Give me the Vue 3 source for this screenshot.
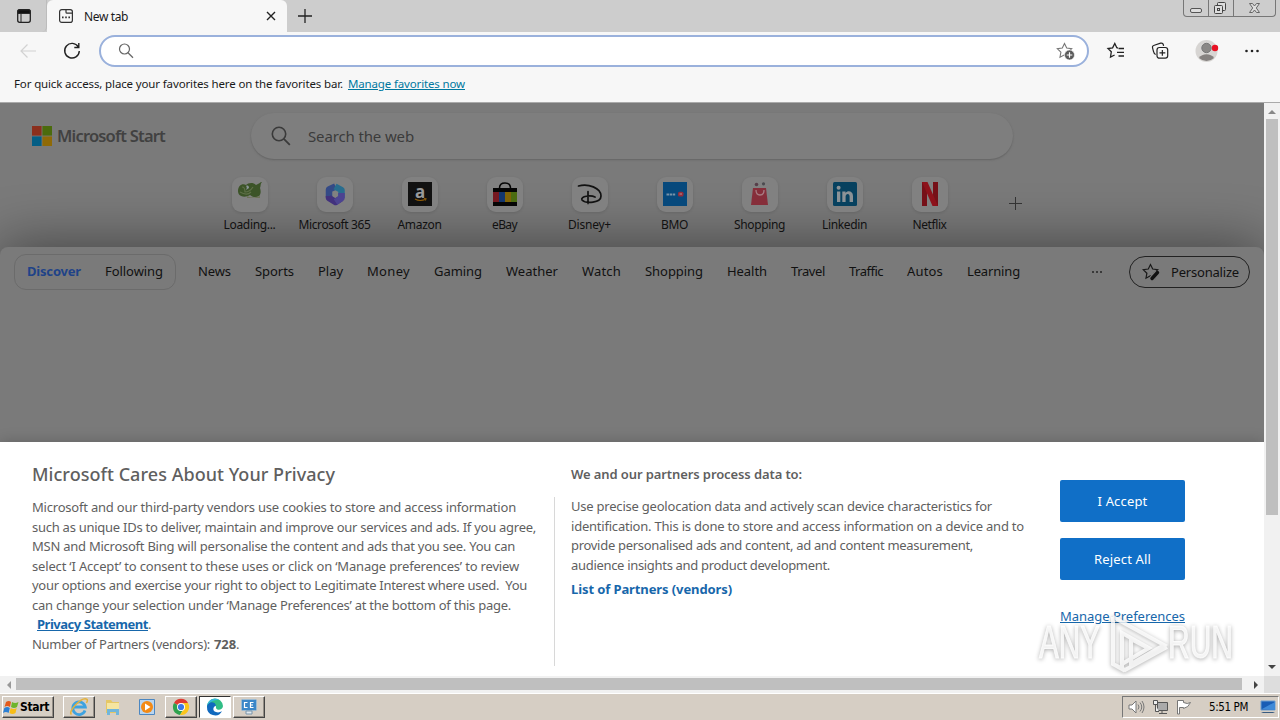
<!--
  App — browser window with the new tab page, the privacy banner and the taskbar
-->
<template>
  <div class="desktop">
    <!-- tab strip -->
    <header class="tab-strip">
      <div class="tab-actions">
        <svg width="16" height="16" viewBox="0 0 16 16"><rect x="1.7" y="1.7" width="12.6" height="12.6" rx="2" fill="none" stroke="#222" stroke-width="1.3" /><path d="M2 2h12v3.4H2zM5 5v9" fill="#111" stroke="#222" /></svg>
      </div>
      <div class="tab">
        <svg width="16" height="16" viewBox="0 0 16 16" fill="none" stroke="#333" stroke-width="1.2"><rect x="1.6" y="1.6" width="12.8" height="12.8" rx="2.2" /><path d="M8 2v2.2q0 1 1 1h5.2" /><path d="M4 9.3h1.6M7.2 9.3h1.6M10.4 9.3H12" stroke-width="1.7" /></svg>
        <span v-fit="44" class="tab-title">New tab</span>
        <svg class="tab-close" width="10" height="10" viewBox="0 0 10 10"><path d="M1 1l8 8M9 1l-8 8" stroke="#222" stroke-width="1.4" /></svg>
      </div>
      <svg class="tab-add" width="16" height="16" viewBox="0 0 16 16"><path d="M8 1v14M1 8h14" stroke="#222" stroke-width="1.3" /></svg>
      <div class="window-buttons">
        <span><svg width="24" height="16" viewBox="0 0 24 16"><rect x="6.5" y="8.5" width="11" height="4" rx="1.5" fill="#ddd" stroke="#555" /></svg></span>
        <span><svg width="24" height="16" viewBox="0 0 24 16" fill="#ddd" stroke="#444"><rect x="8.5" y="2.5" width="8" height="8" rx="1" /><rect x="5.500" y="5.500" width="8" height="8" rx="1" /><rect x="8.500" y="8.500" width="2" height="2" /></svg></span>
        <span><svg width="40" height="16" viewBox="0 0 40 16"><path d="M15.500 3.500h3l2 2.500 2-2.500h3L22.300 8l3.200 4.500h-3l-2-2.500-2 2.500h-3L18.700 8z" fill="#ddd" stroke="#666" /></svg></span>
      </div>
    </header>

    <!-- address bar -->
    <div class="toolbar">
      <svg class="icon-back" width="18" height="16" viewBox="0 0 18 16"><path d="M17 8H2M8.500 1.500L2 8l6.500 6.500" fill="none" stroke="#d2d2d2" stroke-width="1.2" /></svg>
      <svg class="icon-reload" width="18" height="18" viewBox="0 0 18 18"><path d="M15.300 5A7.300 7.300 0 1 0 16.300 9M15.800 1v4.500h-4.500" fill="none" stroke="#222" stroke-width="1.400" /></svg>
      <div class="address">
        <svg width="16" height="16" viewBox="0 0 16 16"><circle cx="6.500" cy="6" r="5" fill="none" stroke="#666" stroke-width="1.200" /><path d="M10 9.800l5 5" stroke="#666" stroke-width="1.300" /></svg>
        <svg width="19" height="18" viewBox="0 0 19 18"><path :d="starPath" fill="none" stroke="#777" stroke-width="1.100" /><circle cx="13.500" cy="13" r="5" fill="#5b5b5b" stroke="#fff" stroke-width=".6" /><path d="M13.500 10.200v5.600M10.700 13h5.600" stroke="#fff" stroke-width="1.200" /></svg>
      </div>
      <div class="toolbar-icons">
        <svg width="18" height="18" viewBox="0 0 18 18" fill="none" stroke="#222" stroke-width="1.300"><path d="M11 6L9.800 5.700 7.800 1.500 5.600 5.900 1 6.500l3.300 3.300-.8 5.200L7.600 13M11.500 6.500H17M10 10.300h7M11.500 14H17" /></svg>
        <svg width="18" height="18" viewBox="0 0 18 18" fill="none" stroke="#222" stroke-width="1.200"><path d="M4.700 12.500C2.500 12 2.800 10 2 7.600 1.200 5 1 4 3.300 3.200L9.600 1.200c1.800-.4 2.600.4 3 2.700" /><rect x="6" y="5.500" width="10.700" height="10.700" rx="2.400" /><path d="M11.350 8v5.800M8.500 10.900h5.800" /></svg>
        <svg width="25" height="24" viewBox="0 0 25 24"><circle cx="11.500" cy="12" r="11" fill="#d7d5d3" /><circle cx="11.500" cy="9" r="4.700" fill="#8a8886" stroke="#777" /><path d="M4 19c3-5 12-5 15 0a11 11 0 0 1-15 0z" fill="#85817f" /><circle cx="20" cy="9" r="3.200" fill="#e81123" /></svg>
        <svg width="16" height="4" viewBox="0 0 16 4" fill="#222"><circle cx="2.500" cy="2" r="1.300" /><circle cx="8" cy="2" r="1.300" /><circle cx="13.500" cy="2" r="1.300" /></svg>
      </div>
    </div>

    <div class="favorites-bar">
      <span v-fit="329">For quick access, place your favorites here on the favorites bar.</span>
      <a v-fit="117">Manage favorites now</a>
    </div>

    <!-- page + vertical scrollbar -->
    <div class="viewport">
      <main class="page">
        <section class="hero">
          <div class="search-row">
            <div class="brand">
              <svg width="20" height="20" viewBox="0 0 20 20"><path d="M0 0h9.600v9.600H0z" fill="#8b2f1d" /><path d="M10.400 0H20v9.600h-9.600z" fill="#4b6b0d" /><path d="M0 10.400h9.600V20H0z" fill="#045e85" /><path d="M10.400 10.400H20V20h-9.600z" fill="#8f6a07" /></svg>
              <span v-fit="108">Microsoft Start</span>
            </div>
            <div class="search-box">
              <svg width="20" height="20" viewBox="0 0 20 20"><circle cx="8" cy="8" r="6.700" fill="none" stroke="#3a3a3a" stroke-width="1.600" /><path d="M12.800 12.800l6 6" stroke="#3a3a3a" stroke-width="1.800" /></svg>
              <span v-fit="106">Search the web</span>
            </div>
          </div>
          <div class="shortcuts">
            <div v-for="s in shortcuts" :key="s.name" class="shortcut">
              <div class="tile">
                <svg v-if="s.icon === 'msn'" width="26" height="26" viewBox="0 0 26 26"><path d="M1 10C1 5 5 2 9 4c2-2 7-3 10 0 3-1 4-3 6-3-2 2-1 4-2 6 1 3 1 6-1 8-3 2-7 1-9-1-5 3-12 2-12-4z" fill="#3c5428" /><path d="M5 6c2 0 3 2 3 5 3 0 6-2 8-5M3 11c5 3 8 3 11 0" fill="none" stroke="#5f7048" stroke-width="1.200" /><path d="M9 5c2-1 3 0 3 2l-3 2c1-2 1-3 0-4z" fill="#8b9699" /><path d="M10 15q6 3 13 0v2H10z" fill="#6c7256" /></svg>
                <svg v-else-if="s.icon === 'm365'" width="24" height="24" viewBox="0 0 24 24" fill="none" stroke-width="6.500" stroke-linejoin="round"><path d="M12.500 4.500L6 7.500v8" stroke="#344a86" /><path d="M6 14v2l6.500 4 6-4" stroke="#42317d" /><path d="M12 4.500l6.500 3.500v8" stroke="#286d8e" /><path d="M18.500 11v5l-6 4" stroke="#4c4391" /></svg>
                <svg v-else-if="s.icon === 'amazon'" width="24" height="24" viewBox="0 0 24 24"><path d="M0 0h24v24H0z" fill="#111" /><text x="12" y="15.500" class="glyph-a">a</text><path d="M7 17q5 3 11 0M16 16.500l2 .3-.6 1.700" fill="none" stroke="#8e5b08" stroke-width="1.100" /></svg>
                <svg v-else-if="s.icon === 'ebay'" width="24" height="24" viewBox="0 0 24 24"><path d="M6.500 8V6q0-5 5.500-5t5.500 5v2" fill="none" stroke="#050505" stroke-width="1.500" /><path d="M0 6h24v18H0z" fill="#050505" /><path d="M0 10h6v10H0z" fill="#751820" /><path d="M6 10h6v10H6z" fill="#12366f" /><path d="M12 10h6v10h-6z" fill="#806307" /><path d="M18 10h6v10h-6z" fill="#4c6c11" /></svg>
                <svg v-else-if="s.icon === 'disney'" width="26" height="24" viewBox="0 0 26 24" fill="none" stroke="#111" stroke-linecap="round"><path d="M1.500 4C11 1 24 6 24 14c0 7-15 8-19 4-2-4 9-5 13-3M11 9.500v12" stroke-width="1.700" /></svg>
                <svg v-else-if="s.icon === 'bmo'" width="24" height="24" viewBox="0 0 24 24"><path d="M0 0h24v24H0z" fill="#07497c" /><path d="M3.500 12.500h9" stroke="#7792a8" stroke-width="2.200" stroke-dasharray="2.500 .6" /><rect x="15" y="9.700" width="5.500" height="4.800" rx="1.500" fill="#962c3b" /><path d="M16.500 12h2.500" stroke="#a69699" /></svg>
                <svg v-else-if="s.icon === 'shopping'" width="24" height="24" viewBox="0 0 24 24"><circle cx="8.500" cy="2.500" r="1.800" fill="#563e49" /><circle cx="15.500" cy="1.800" r="1.600" fill="#4b4b50" /><path d="M5 6h13l2 17H3z" fill="#862e3a" /><path d="M8 8q0 5 4 5t4-5" fill="none" stroke="#a77b82" stroke-width="1.300" /></svg>
                <svg v-else-if="s.icon === 'linkedin'" width="24" height="24" viewBox="0 0 24 24"><rect width="24" height="24" rx="1.500" fill="#07415f" /><circle cx="5.600" cy="5.800" r="2" fill="#8b9296" /><path d="M4 9.500h3.300V20H4zM9.300 9.500h3.200V11c2-2.800 7.500-2.200 7.500 3v6h-3.400v-5.500c0-3.400-4-3.200-4 0V20H9.300z" fill="#8b9296" /></svg>
                <svg v-else width="18" height="24" viewBox="0 0 18 24"><path d="M1 0h5v24H1zM12 0h5v24h-5z" fill="#761018" /><path d="M1 0h5.500L17 24h-5.500z" fill="#8d121b" /></svg>
              </div>
              <span v-fit="s.width">{{ s.name }}</span>
            </div>
            <svg class="add-shortcut" width="13" height="13" viewBox="0 0 13 13"><path d="M6.500 0v13M0 6.500h13" stroke="#333" /></svg>
          </div>
        </section>

        <section class="feed">
          <nav class="feed-nav">
            <div class="feed-tabs">
              <b v-fit="54">Discover</b>
              <span v-fit="58">Following</span>
            </div>
            <span v-for="n in channels" :key="n.name" v-fit="n.width">{{ n.name }}</span>
            <svg class="more" width="12" height="4" viewBox="0 0 12 4" fill="#242424"><circle cx="2" cy="2" r="1" /><circle cx="6" cy="2" r="1" /><circle cx="10" cy="2" r="1" /></svg>
            <div class="personalize">
              <svg width="18" height="18" viewBox="0 0 18 18"><path :d="starPath" fill="none" stroke="#191919" stroke-width="1.200" /><path d="M10 15.500l5.500-6" stroke="#7a7a7a" stroke-width="6" /><path d="M10 15.500l5.500-6" stroke="#111" stroke-width="3.400" stroke-linecap="round" /></svg>
              <span v-fit="68">Personalize</span>
            </div>
          </nav>
        </section>

        <!-- privacy banner -->
        <section class="banner">
          <div class="notice">
            <h2 v-fit="303">Microsoft Cares About Your Privacy</h2>
            <p v-for="l in noticeLines" :key="l.text"><span v-fit="l.width">{{ l.text }}</span></p>
            <p class="statement"><a v-fit="111">Privacy Statement</a>.</p>
            <p><span v-fit="178">Number of Partners (vendors):</span><b v-fit="22" class="count">728</b>.</p>
          </div>
          <div class="purposes">
            <h3 v-fit="231">We and our partners process data to:</h3>
            <p v-for="l in purposeLines" :key="l.text"><span v-fit="l.width">{{ l.text }}</span></p>
            <a v-fit="161" class="vendors">List of Partners (vendors)</a>
          </div>
          <div class="banner-buttons">
            <button><span v-fit="50">I Accept</span></button>
            <button><span v-fit="57">Reject All</span></button>
            <a v-fit="125">Manage Preferences</a>
          </div>
          <svg class="watermark" width="204" height="66" viewBox="0 0 204 66">
            <text x="5" y="50" textLength="61" lengthAdjust="spacingAndGlyphs">ANY</text>
            <path d="M79 9l51 28-33 19V31l17 9M79 9v47l9 5V25l27 15-27 16M79 56l12 6 42-23" />
            <text x="134" y="50" textLength="65" lengthAdjust="spacingAndGlyphs">RUN</text>
          </svg>
        </section>
      </main>
      <div class="v-scroll">
        <i class="arrow up"></i>
        <div class="v-thumb"></div>
        <i class="arrow down"></i>
      </div>
    </div>

    <div class="h-scroll">
      <i class="arrow left"></i>
      <div class="h-thumb"></div>
      <i class="arrow right"></i>
      <div class="corner"></div>
    </div>

    <!-- taskbar -->
    <footer class="taskbar">
      <div class="start raised">
        <svg width="16" height="16" viewBox="0 0 16 16"><path d="M3 3q3-2 5 0L7 8Q4 6 1.500 8z" fill="#e35a1c" /><path d="M9 3q3 2 6.500 0L14 8q-3 2-6 0z" fill="#6fb52c" /><path d="M1.300 9q3-2 5.500 0l-1.200 5Q3 12 0 14z" fill="#2b7fd4" /><path d="M7.700 9q3 2 6 0l-1.200 5q-3 2-6 0z" fill="#f8bd17" /></svg>
        <span v-fit="29">Start</span>
      </div>
      <div class="task raised">
        <svg width="20" height="20" viewBox="0 0 20 20" fill="none"><path d="M16 13.500A6.300 6.300 0 1 1 16.300 10H5" stroke="#3da2e0" stroke-width="2.800" /><path d="M2.500 17.500C-2 15 13-1 18 2.300q1 1-.5 3.700" stroke="#e4b23c" stroke-width="1.500" /></svg>
      </div>
      <div class="task">
        <svg width="18" height="18" viewBox="0 0 18 18"><path d="M2 2h5l1.500 2H15v11H2z" fill="#e5c765" /><path d="M3 5h12v9H3z" fill="#f5e5a0" /><path d="M3 17v-6h12v6h-3v-3H6v3z" fill="#71b6db" /></svg>
      </div>
      <div class="task">
        <svg width="18" height="18" viewBox="0 0 18 18"><path d="M1.500 1.500h15v15h-15z" fill="#b9d5ef" stroke="#4c87c1" /><circle cx="9" cy="9" r="6" fill="#f38a15" /><path d="M7 5.500v7L12.500 9z" fill="#fff" /></svg>
      </div>
      <div class="task raised">
        <svg width="18" height="18" viewBox="0 0 18 18"><path d="M9 9L2 5A8 8 0 0 1 16 5z" fill="#df3a31" /><path d="M2 5a8 8 0 0 0 6 12l4-7-3-1z" fill="#2fa24e" /><path d="M16 5a8 8 0 0 1-8 12l4.500-7L10 5z" fill="#fbc51b" /><circle cx="9" cy="9" r="4" fill="#fff" /><circle cx="9" cy="9" r="3.100" fill="#3b78e7" /></svg>
      </div>
      <div class="task active">
        <svg width="18" height="18" viewBox="0 0 18 18"><path d="M1 9a8 8 0 0 1 16-1c0 4-6 5-7 2 1-5-6-5-7 0" fill="#31bd86" /><path d="M1 9c0-5 8-7 9-1-3 0-4 5 0 6 2 .8 4 .3 6-.8A8 8 0 0 1 1 9z" fill="#1169be" /><path d="M1 7.500A8 8 0 0 1 13 2C8 2 3 4 1 7.500z" fill="#35b7df" /></svg>
      </div>
      <div class="task raised">
        <svg width="18" height="18" viewBox="0 0 18 18"><rect x="1.500" y="1.500" width="15" height="11" rx="1" fill="#3c87c8" stroke="#9bbbd3" /><path d="M7.500 4.500h-3v5h3M13.500 4.500h-3v5h3M10.500 7h2.500" fill="none" stroke="#fff" stroke-width="1.200" /><path d="M6 13h6v3H6z" fill="#e2eaf0" stroke="#7894aa" /></svg>
      </div>
      <div class="tray">
        <svg width="17" height="16" viewBox="0 0 17 16" fill="none" stroke="#777"><path d="M1 6h3l4-4v12l-4-4H1z" fill="#fff" /><path d="M10 5.500q2 2.500 0 5M12 3.500q3.500 4.500 0 9M14 2q4 6 0 12" /></svg>
        <svg width="17" height="16" viewBox="0 0 17 16"><path d="M5.500 3.500h10v8h-10z" fill="#aaa" stroke="#555" /><path d="M7 14.500h8M10 12v2" stroke="#555" /><path d="M1.500 1.500h4v4h-4zM3.500 6v6.500H7" fill="#eee" stroke="#555" /></svg>
        <svg width="16" height="16" viewBox="0 0 16 16"><path d="M1.500 15V1.500h6v2q4 2 7 0-2 5-7 6v-1h-4V15z" fill="#fff" stroke="#777" /></svg>
        <span v-fit="39">5:51 PM</span>
        <svg class="monitor" width="16" height="14" viewBox="0 0 16 14"><path d="M1 1h14v9H1z" fill="#195db5" stroke="#6f9fd0" /><path d="M2 9L15 2v8z" fill="#3f8ad8" /><path d="M3 12h10l2 1H1z" fill="#385b80" /></svg>
      </div>
    </footer>
  </div>
</template>

<script setup>
// ============================================================
// 数据
// ============================================================

const starPath = 'M8.500 1.500L6.300 6 1.300 6.700l3.600 3.500-.9 5 4.500-2.400 4.500 2.400-.9-5 3.600-3.500-5-.7z'

// 快捷方式：width 为标签文字宽度
const shortcuts = [
  { name: 'Loading...', icon: 'msn', width: 52 },
  { name: 'Microsoft 365', icon: 'm365', width: 72 },
  { name: 'Amazon', icon: 'amazon', width: 44 },
  { name: 'eBay', icon: 'ebay', width: 25 },
  { name: 'Disney+', icon: 'disney', width: 43 },
  { name: 'BMO', icon: 'bmo', width: 27 },
  { name: 'Shopping', icon: 'shopping', width: 51 },
  { name: 'Linkedin', icon: 'linkedin', width: 45 },
  { name: 'Netflix', icon: 'netflix', width: 34 }
]

const channels = [
  { name: 'News', width: 33 },
  { name: 'Sports', width: 39 },
  { name: 'Play', width: 25 },
  { name: 'Money', width: 43 },
  { name: 'Gaming', width: 48 },
  { name: 'Weather', width: 52 },
  { name: 'Watch', width: 39 },
  { name: 'Shopping', width: 58 },
  { name: 'Health', width: 40 },
  { name: 'Travel', width: 34 },
  { name: 'Traffic', width: 34 },
  { name: 'Autos', width: 36 },
  { name: 'Learning', width: 53 }
]

const noticeLines = [
  { text: 'Microsoft and our third-party vendors use cookies to store and access information', width: 484 },
  { text: 'such as unique IDs to deliver, maintain and improve our services and ads. If you agree,', width: 504 },
  { text: 'MSN and Microsoft Bing will personalise the content and ads that you see. You can', width: 483 },
  { text: 'select ‘I Accept’ to consent to these uses or click on ‘Manage preferences’ to review', width: 487 },
  { text: 'your options and exercise your right to object to Legitimate Interest where used.  You', width: 495 },
  { text: 'can change your selection under ‘Manage Preferences’ at the bottom of this page.', width: 479 }
]

const purposeLines = [
  { text: 'Use precise geolocation data and actively scan device characteristics for', width: 421 },
  { text: 'identification. This is done to store and access information on a device and to', width: 453 },
  { text: 'provide personalised ads and content, ad and content measurement,', width: 402 },
  { text: 'audience insights and product development.', width: 259 }
]

// ============================================================
// 指令
// ============================================================

/**
 * v-fit="宽度"：调整字间距，让单行文字正好占满给定宽度
 */
const vFit = {
  mounted(el, { value }) {
    const natural = el.getBoundingClientRect().width
    el.style.letterSpacing = `${(value - natural) / el.textContent.length}px`
  }
}
</script>

<style>
html, body {
  overflow: hidden;
}
</style>

<style scoped>
.desktop {
  display: flex;
  flex-direction: column;
  width: 1280px;
  height: 720px;
  overflow: hidden;
  font-family: "Noto Sans", "Open Sans", sans-serif;
  font-size: 12px;
  color: #1a1a1a;
  background: #f7f7f7;
}

.desktop * {
  box-sizing: border-box;
}

svg {
  display: block;
  flex: none;
  overflow: visible;
}

span, a, b, h2, h3 {
  white-space: pre;
}

p {
  margin: 0;
}

/* 标签栏 */
.tab-strip {
  display: flex;
  flex: none;
  height: 32px;
  background: #cdcdcd;
}

.tab-actions {
  width: 47px;
  padding: 8px 0 0 16px;
  border-right: 1px solid #bcbcbc;
  border-bottom-right-radius: 5px;
}

.tab {
  display: flex;
  align-items: center;
  width: 240px;
  padding: 0 11px 0 11px;
  background: #f7f7f7;
  border-radius: 6px 6px 0 0;
}

.tab-title {
  margin-left: 10px;
}

.tab-close {
  margin-left: auto;
}

.tab-add {
  margin: 8px 0 0 10px;
}

.window-buttons {
  display: flex;
  width: 93px;
  height: 17px;
  margin: 0 4px 0 auto;
  border: 1px solid #777;
  border-top: 0;
  border-radius: 0 0 4px 4px;
}

.window-buttons span + span {
  border-left: 1px solid #777;
}

/* 工具栏 */
.toolbar {
  display: flex;
  flex: none;
  align-items: center;
  height: 38px;
  padding-left: 19px;
}

.icon-reload {
  margin-left: 26px;
}

.address {
  display: flex;
  align-items: center;
  justify-content: space-between;
  width: 990px;
  height: 32px;
  margin-left: 18px;
  padding: 0 12px 0 17px;
  border: 2px solid #9ab1dc;
  border-radius: 16px;
  background: #fff;
}

.toolbar-icons {
  display: flex;
  align-items: center;
  margin-left: 18px;
}

.toolbar-icons svg:nth-child(2) {
  margin-left: 26px;
}

.toolbar-icons svg:nth-child(3) {
  margin-left: 26px;
}

.toolbar-icons svg:nth-child(4) {
  margin-left: 24px;
}

.favorites-bar {
  display: flex;
  flex: none;
  gap: 5px;
  height: 33px;
  padding: 6px 14px 0;
  line-height: 16px;
  font-size: 11.5px;
  border-bottom: 1px solid #aaa;
}

.favorites-bar a {
  color: #00789f;
  text-decoration: underline;
}

/* 页面 */
.viewport {
  display: flex;
  flex: none;
  height: 573px;
}

.page {
  display: flex;
  flex-direction: column;
  width: 1264px;
  overflow: hidden;
  background: #7a7a7a;
}

.hero {
  position: relative;
  z-index: 1;
  flex: none;
  height: 144px;
  padding-top: 10px;
}

.search-row {
  display: flex;
  align-items: center;
}

.brand {
  display: flex;
  align-items: center;
  width: 219px;
  margin-left: 32px;
  font-size: 16.5px;
  font-weight: 600;
  color: #414141;
  line-height: 24px;
}

.brand span {
  margin-left: 5px;
}

.search-box {
  display: flex;
  align-items: center;
  width: 762px;
  height: 46px;
  padding-left: 20px;
  border-radius: 23px;
  background: #7e7e7e;
  box-shadow: 0 1px 2px #636363;
  font-size: 15px;
  color: #3b3b3b;
}

.search-box span {
  margin-left: 17px;
}

.shortcuts {
  display: flex;
  padding: 18px 0 0 207px;
}

.shortcut {
  display: flex;
  flex-direction: column;
  align-items: center;
  width: 85px;
  line-height: 16px;
  font-size: 12px;
  color: #111;
}

.tile {
  display: flex;
  align-items: center;
  justify-content: center;
  width: 36px;
  height: 35px;
  margin-bottom: 5px;
  padding-bottom: 1px;
  border-radius: 9px;
  background: #818181;
  box-shadow: 0 1px 3px rgba(0, 0, 0, .12);
}

.glyph-a {
  font: bold 17px "Noto Sans", sans-serif;
  text-anchor: middle;
  fill: #999;
}

.add-shortcut {
  margin: 20px 0 0 37px;
}

.feed {
  flex: none;
  height: 195px;
  padding-top: 6px;
  border-radius: 8px 8px 0 0;
  background: #7a7a7a;
  box-shadow: 0 -3px 55px rgba(0, 0, 0, .45);
}

.feed-nav {
  display: flex;
  align-items: center;
  gap: 24px;
  height: 37px;
  padding-left: 14px;
  font-size: 13px;
  color: #111;
}

.feed-nav > span {
  flex: none;
  margin-top: -1px;
}

.feed-tabs {
  display: flex;
  align-items: center;
  gap: 24px;
  width: 162px;
  height: 36px;
  margin-right: -2px;
  padding: 0 0 2px 12px;
  border: 1px solid #6b6b6b;
  border-radius: 12px;
}

.feed-tabs b {
  color: #1f4388;
}

.more {
  margin-left: auto;
}

.personalize {
  display: flex;
  align-items: center;
  width: 121px;
  height: 32px;
  margin-right: 14px;
  margin-left: 2px;
  padding-left: 12px;
  border: 1px solid #222;
  border-radius: 16px;
}

.personalize span {
  margin-left: 11px;
}

/* 隐私横幅 */
.banner {
  position: relative;
  display: flex;
  flex: none;
  height: 234px;
  padding: 0 32px;
  background: #fff;
  box-shadow: 0 0 14px rgba(0, 0, 0, .2);
  font-size: 13px;
  line-height: 19.5px;
  color: #5f5f5f;
}

.notice {
  width: 539px;
  padding-top: 20px;
  background: linear-gradient(#d8d8d8, #d8d8d8) 522px 55px / 1px 169px no-repeat;
}

.notice h2 {
  display: table;
  margin: 0 0 11px;
  font-size: 18px;
  font-weight: 500;
  line-height: 25px;
}

.statement {
  padding-left: 5px;
}

.statement a {
  font-weight: 700;
  color: #1767ab;
  text-decoration: underline;
}

.count {
  margin-left: 4px;
}

.purposes {
  width: 489px;
  padding-top: 22px;
}

.purposes h3 {
  display: table;
  margin: 0 0 13px;
  font-size: 13px;
  font-weight: 600;
  line-height: 20px;
}

.vendors {
  display: inline-block;
  margin-top: 5px;
  font-weight: 700;
  color: #1767ab;
}

.banner-buttons {
  display: flex;
  flex-direction: column;
  align-items: flex-start;
  padding-top: 38px;
}

.banner-buttons button {
  width: 125px;
  height: 42px;
  margin: 0 0 16px;
  padding: 2px 0 0;
  border: 0;
  border-radius: 2px;
  background: #106fc7;
  color: #fff;
  font: inherit;
}

.banner-buttons a {
  margin-top: 11px;
  color: #1767ab;
  text-decoration: underline;
}

.watermark {
  position: absolute;
  left: 1034px;
  top: 166px;
  filter: drop-shadow(0 1px 2px rgba(0, 0, 0, .38));
}

.watermark text {
  font: 47px "Liberation Sans", sans-serif;
  fill: rgba(255, 255, 255, .8);
  stroke: rgba(255, 255, 255, .8);
  stroke-width: 1;
}

.watermark path {
  fill: none;
  stroke: rgba(255, 255, 255, .8);
  stroke-width: 4;
}

/* 滚动条 */
.v-scroll {
  display: flex;
  flex-direction: column;
  align-items: center;
  width: 16px;
  background: #f1f1f1;
}

.v-thumb {
  width: 12px;
  height: 396px;
  margin: 5px 0 auto;
  background: #bfbfbf;
}

.arrow {
  width: 0;
  height: 0;
  border: 4px solid transparent;
}

.up {
  margin-top: 3px;
  border-bottom-color: #888;
}

.down {
  margin-bottom: 3px;
  border-top-color: #444;
}

.h-scroll {
  display: flex;
  flex: none;
  align-items: center;
  height: 17px;
  background: #f1f1f1;
}

.left {
  margin: 0 5px 0 3px;
  border-right-color: #999;
}

.h-thumb {
  width: 1226px;
  height: 12px;
  margin-bottom: 1px;
  background: #bfbfbf;
}

.right {
  margin-left: 12px;
  border-left-color: #444;
}

.corner {
  width: 16px;
  height: 17px;
  margin-left: auto;
  background: #ddd;
}

/* 任务栏 */
.taskbar {
  display: flex;
  flex: 1;
  align-items: flex-start;
  padding: 2px 1px 0 2px;
  border-top: 1px solid #fff;
  background: #d6cec4;
  font-family: "DejaVu Sans Condensed", "DejaVu Sans", sans-serif;
  color: #000;
}

.raised {
  border: 1px solid;
  border-color: #fff #444 #444 #fff;
  box-shadow: inset -1px -1px #958f87;
}

.start {
  display: flex;
  align-items: center;
  gap: 1px;
  width: 52px;
  height: 22px;
  margin-right: 9px;
  font-size: 12px;
  font-weight: 700;
}

.task {
  display: flex;
  align-items: center;
  justify-content: center;
  width: 32px;
  height: 22px;
  margin-right: 2px;
}

.active {
  border: 1px solid;
  border-color: #333 #fff #fff #333;
  background: #fff;
}

.tray {
  display: flex;
  align-items: center;
  width: 157px;
  height: 22px;
  margin-left: auto;
  padding-left: 5px;
  border: 1px solid;
  border-color: #777 #fff #fff #777;
  font-size: 11.5px;
}

.tray svg + svg {
  margin-left: 7px;
}

.tray span {
  margin-left: 17px;
}

.tray .monitor {
  margin-left: 12px;
}
</style>
